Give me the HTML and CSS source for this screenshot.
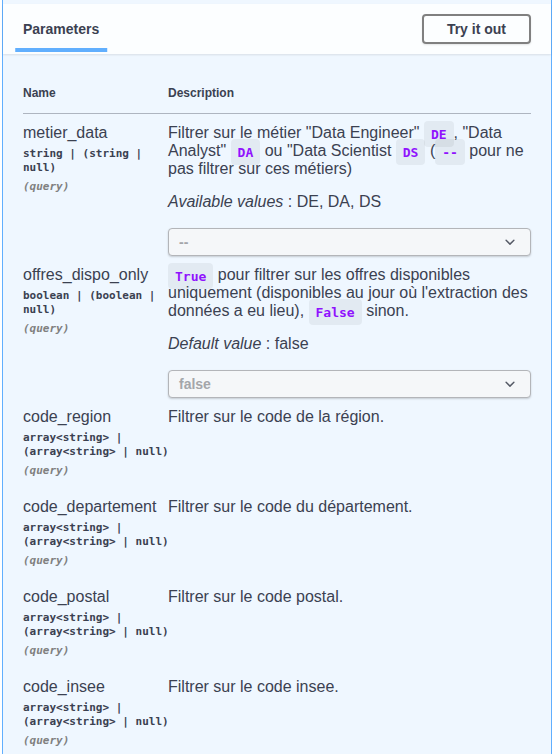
FILE: index.html
```html
<!DOCTYPE html>
<html lang="fr">
<head>
<meta charset="utf-8">
<title>Parameters</title>
<link rel="stylesheet" href="styles.css">
</head>
<body>
<div class="opblock">
  <div class="section-header">
    <div class="tab-header">
      <h4 class="tab-title"><span>Parameters</span></h4>
    </div>
    <button class="try-btn" type="button">Try it out</button>
  </div>
  <div class="table-container">
    <table class="params">
      <thead>
        <tr>
          <th class="col-name">Name</th>
          <th class="col-desc">Description</th>
        </tr>
      </thead>
      <tbody>
        <tr class="with-select">
          <td>
            <div class="param-name">metier_data</div>
            <div class="param-type">string | (string | null)</div>
            <div class="param-in">(query)</div>
          </td>
          <td class="desc">
            <p>Filtrer sur le métier "Data Engineer" <code>DE</code>, "Data Analyst" <code>DA</code> ou "Data Scientist <code>DS</code> (<code>--</code> pour ne pas filtrer sur ces métiers)</p>
            <p><i>Available values</i> : DE, DA, DS</p>
            <div class="select">
              <span>--</span>
              <svg width="20" height="16" viewBox="0 2 20 16" aria-hidden="true"><path d="M13.418 7.859a.695.695 0 0 1 .978 0 .68.68 0 0 1 0 .969l-3.908 3.83a.697.697 0 0 1-.979 0l-3.908-3.83a.68.68 0 0 1 0-.969.695.695 0 0 1 .978 0L10 11l3.418-3.141z"/></svg>
            </div>
          </td>
        </tr>
        <tr class="with-select">
          <td>
            <div class="param-name">offres_dispo_only</div>
            <div class="param-type">boolean | (boolean | null)</div>
            <div class="param-in">(query)</div>
          </td>
          <td class="desc">
            <p><code>True</code> pour filtrer sur les offres disponibles uniquement (disponibles au jour où l'extraction des données a eu lieu), <code>False</code> sinon.</p>
            <p><i>Default value</i> : false</p>
            <div class="select">
              <span>false</span>
              <svg width="20" height="16" viewBox="0 2 20 16" aria-hidden="true"><path d="M13.418 7.859a.695.695 0 0 1 .978 0 .68.68 0 0 1 0 .969l-3.908 3.83a.697.697 0 0 1-.979 0l-3.908-3.830a.68.68 0 0 1 0-.969.695.695 0 0 1 .978 0L10 11l3.418-3.141z"/></svg>
            </div>
          </td>
        </tr>
        <tr>
          <td>
            <div class="param-name">code_region</div>
            <div class="param-type">array&lt;string&gt; | <span class="nowrap">(array&lt;string&gt; | null)</span></div>
            <div class="param-in">(query)</div>
          </td>
          <td class="desc"><p>Filtrer sur le code de la région.</p></td>
        </tr>
        <tr>
          <td>
            <div class="param-name">code_departement</div>
            <div class="param-type">array&lt;string&gt; | <span class="nowrap">(array&lt;string&gt; | null)</span></div>
            <div class="param-in">(query)</div>
          </td>
          <td class="desc"><p>Filtrer sur le code du département.</p></td>
        </tr>
        <tr>
          <td>
            <div class="param-name">code_postal</div>
            <div class="param-type">array&lt;string&gt; | <span class="nowrap">(array&lt;string&gt; | null)</span></div>
            <div class="param-in">(query)</div>
          </td>
          <td class="desc"><p>Filtrer sur le code postal.</p></td>
        </tr>
        <tr>
          <td>
            <div class="param-name">code_insee</div>
            <div class="param-type">array&lt;string&gt; | <span class="nowrap">(array&lt;string&gt; | null)</span></div>
            <div class="param-in">(query)</div>
          </td>
          <td class="desc"><p>Filtrer sur le code insee.</p></td>
        </tr>
      </tbody>
    </table>
  </div>
</div>
</body>
</html>
```

FILE: styles.css
```css
html, body {
  margin: 0;
  padding: 0;
  background: #ffffff;
  overflow: hidden;
}

body {
  font-family: "Liberation Sans", Arial, sans-serif;
  color: #3b4151;
}

.opblock {
  margin: 0 3px 0 2px;
  border: 1px solid #61affe;
  border-top: 0;
  background: rgba(97, 175, 254, 0.1);
  padding-top: 4px;
  min-height: 900px;
}

.section-header {
  display: flex;
  align-items: center;
  justify-content: space-between;
  box-sizing: border-box;
  min-height: 50px;
  padding: 8px 20px;
  background: rgba(255, 255, 255, 0.8);
  box-shadow: 0 1px 2px rgba(0, 0, 0, 0.1);
}

.tab-title {
  margin: 0;
  font-size: 14px;
  font-weight: 700;
  line-height: normal;
}

.tab-title span {
  position: relative;
}

.tab-title span::after {
  content: "";
  position: absolute;
  left: 50%;
  bottom: -15px;
  width: 120%;
  height: 4px;
  transform: translateX(-50%);
  background: #61affe;
}

.try-btn {
  font-family: "Liberation Sans", Arial, sans-serif;
  font-size: 14px;
  font-weight: 700;
  line-height: normal;
  color: #3b4151;
  background: transparent;
  border: 2px solid #808080;
  border-radius: 4px;
  padding: 5px 23px;
  box-shadow: 0 1px 2px rgba(0, 0, 0, 0.1);
}

.table-container {
  padding: 20px;
}

.params {
  width: 100%;
  border-collapse: collapse;
  table-layout: fixed;
}

.params th {
  text-align: left;
  font-size: 12px;
  font-weight: 700;
  line-height: 13px;
  padding: 13px 0;
  border-bottom: 1px solid rgba(59, 65, 81, 0.2);
}

.col-name {
  width: 145px;
}

.params td {
  padding: 10px 0;
  vertical-align: top;
}

.params tr.with-select td {
  padding-bottom: 0;
}

.param-name {
  font-size: 16px;
  line-height: normal;
}

.param-type {
  font-family: "DejaVu Sans Mono", monospace;
  font-size: 11px;
  font-weight: 700;
  line-height: 14px;
  padding: 5px 0;
}

.nowrap {
  white-space: nowrap;
}

.param-in {
  font-family: "DejaVu Sans Mono", monospace;
  font-size: 11px;
  font-weight: 700;
  font-style: italic;
  line-height: 14px;
  color: #808080;
}

.desc p {
  margin: 0;
  font-size: 16px;
  line-height: normal;
}

.desc p + p {
  margin-top: 15px;
}

.desc code {
  font-family: "DejaVu Sans Mono", monospace;
  font-size: 13px;
  font-weight: 700;
  color: #9012fe;
  background: rgba(0, 0, 0, 0.05);
  border-radius: 4px;
  padding: 5.5px 7px;
}

.select {
  margin-top: 17px;
  display: flex;
  align-items: center;
  justify-content: space-between;
  padding: 5px 10px;
  border: 1px solid #b3b5b9;
  border-radius: 4px;
  background: #f5f7f9;
  box-shadow: 0 1px 2px rgba(0, 0, 0, 0.18);
  font-size: 14px;
  font-weight: 700;
  line-height: normal;
  color: #a4a6aa;
}

.select svg {
  display: block;
  fill: #555a66;
}
```
